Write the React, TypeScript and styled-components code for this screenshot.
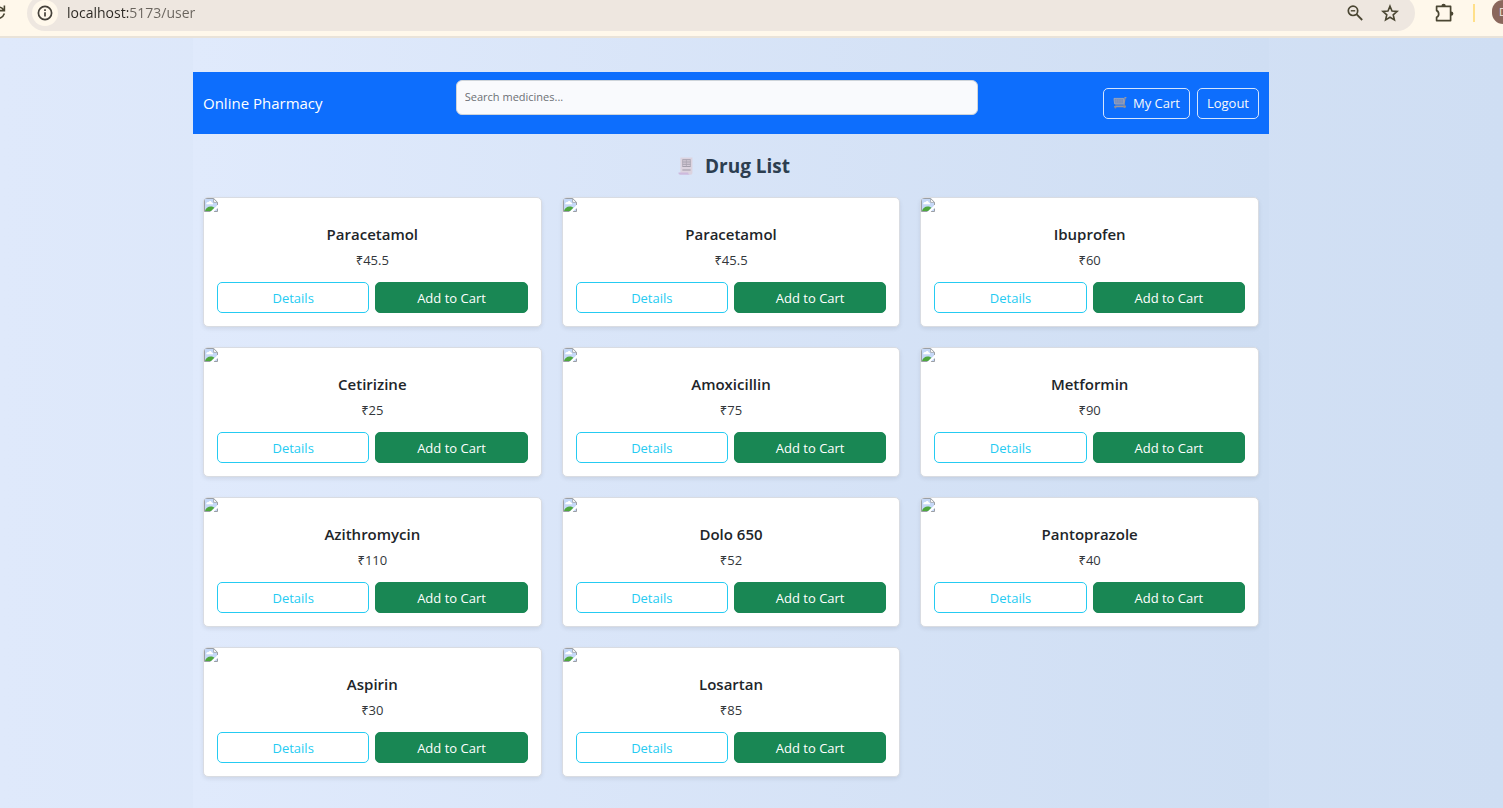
import React from "react";
import styled, { createGlobalStyle, css } from "styled-components";

const GlobalStyle = createGlobalStyle`
  *, *::before, *::after { box-sizing: border-box; }
  html, body { margin: 0; }
  body {
    font-family: "Open Sans", "Noto Sans", sans-serif;
    font-size: 13px;
    line-height: 20px;
    color: #212529;
    background: #cfdef3;
  }
  button, input { font: inherit; }
`;

const Screen = styled.div`
  display: flex;
  flex-direction: column;
  min-height: 100vh;
`;

/* ---------- browser toolbar ---------- */

const BrowserBar = styled.header`
  display: flex;
  align-items: flex-start;
  height: 38px;
  overflow: hidden;
  background: #fff8eb;
  border-bottom: 2px solid #e9e3d9;
`;

const ToolButton = styled.button<{ $width: number }>`
  flex: none;
  display: flex;
  align-items: center;
  justify-content: center;
  width: ${(p) => p.$width}px;
  height: 26px;
  padding: 0;
  border: 0;
  background: none;
  color: #4a4632;
`;

const ReloadButton = styled(ToolButton)`
  justify-content: flex-start;
`;

const AddressBar = styled.div`
  flex: 1;
  display: flex;
  align-items: center;
  height: 36px;
  margin-top: -5px;
  padding: 0 8px 0 5px;
  border-radius: 18px;
  background: #eee7e0;
`;

const SiteInfo = styled(ToolButton)`
  border-radius: 50%;
  background: #fff8eb;
  color: #45413a;
`;

const Address = styled.input`
  flex: 1;
  min-width: 0;
  margin-left: 9px;
  padding: 0;
  border: 0;
  outline: 0;
  font-size: 14px;
  line-height: 20px;
  color: transparent;
  background: linear-gradient(to right, #2b2823 61px, #68635c 61px);
  background-clip: text;
  -webkit-background-clip: text;
`;

const BarDivider = styled.span`
  flex: none;
  width: 2px;
  height: 18px;
  margin: 4px 17px 0 0;
  background: #ffe08a;
`;

const Avatar = styled.button`
  flex: none;
  width: 11px;
  height: 24px;
  padding: 0 0 0 7px;
  border: 0;
  border-radius: 12px 0 0 12px;
  overflow: hidden;
  background: #8a675c;
  color: #f3e9e4;
  font-size: 11px;
  line-height: 24px;
  text-align: left;
`;

/* ---------- page ---------- */

const Page = styled.div`
  flex: 1;
  display: flex;
  padding: 0 234px 0 193px;
  background: linear-gradient(to right, #dfe9fb, #cfdef3);
`;

const Container = styled.main`
  flex: 1;
  min-width: 0;
  padding: 34px 0 31px;
  background: linear-gradient(to right, #e0eafc, #cfdef3);
`;

const Navbar = styled.nav`
  display: flex;
  align-items: center;
  justify-content: space-between;
  height: 62px;
  padding: 0 10px;
  background: #0d6efd;
`;

const Brand = styled.a`
  margin-right: 8px;
  font-size: 15px;
  line-height: 24px;
  color: #fff;
  text-decoration: none;
`;

const Search = styled.input`
  flex: 0 1 522px;
  align-self: flex-start;
  min-width: 0;
  height: 35px;
  margin-top: 8px;
  padding: 0 8px 2px;
  border: 1px solid #ced4da;
  border-radius: 6px;
  background: #f9fafd;
  font-size: 11px;
  line-height: 20px;
  color: #212529;
  &::placeholder {
    color: #6c7075;
    opacity: 1;
  }
`;

const NavActions = styled.div`
  display: flex;
  gap: 7px;
`;

const buttonBase = css`
  display: flex;
  align-items: center;
  justify-content: center;
  height: 31px;
  padding: 0 9px;
  border: 1px solid;
  border-radius: 5px;
  font-size: 13px;
  line-height: 20px;
  cursor: pointer;
`;

const OutlineLight = styled.button`
  ${buttonBase}
  gap: 6px;
  border-color: #d5e5fd;
  background: transparent;
  color: #f8f9fa;
`;

const Heading = styled.h1`
  display: flex;
  align-items: center;
  justify-content: center;
  gap: 12px;
  margin: 20px 0 19px;
  padding-left: 6px;
  font-size: 19px;
  line-height: 24px;
  font-weight: 700;
  color: #2c3e50;
`;

const DrugGrid = styled.section`
  display: grid;
  grid-template-columns: repeat(3, 1fr);
  gap: 20px;
  padding: 0 10px;
`;

const Card = styled.article`
  overflow: hidden;
  border: 1px solid #d9dce2;
  border-radius: 5px;
  background: #fff;
  box-shadow: 0 2px 4px rgba(0, 0, 0, 0.08);
`;

const CardImage = styled.div`
  display: flex;
  height: 14px;
`;

const CardBody = styled.div`
  padding: 13px;
  text-align: center;
`;

const DrugName = styled.h2`
  margin: 0 0 7px;
  font-size: 15px;
  line-height: 18px;
  font-weight: 600;
`;

const Price = styled.p`
  margin: 0 0 12px;
  font-size: 13px;
  line-height: 20px;
  color: #33373b;
`;

const CardActions = styled.div`
  display: grid;
  grid-template-columns: 1fr 1fr;
  gap: 6px;
`;

const DetailsButton = styled.button`
  ${buttonBase}
  border-color: #25cbf2;
  background: #fff;
  color: #25cbf2;
`;

const AddButton = styled.button`
  ${buttonBase}
  border-color: #198754;
  background: #198754;
  color: #fff;
`;

/* ---------- drawings ---------- */

const ReloadIcon = () => (
  <svg width="6" height="20" viewBox="0 0 6 20" fill="none" stroke="#4a4632" strokeWidth="1.6" aria-hidden="true">
    <path d="M0 4.2C1.6 4.5 2.6 5.4 3.6 7M4.4 2.6v5H0M4.4 10.4C3.6 12.8 2 14.4 0 15.2" />
  </svg>
);

const InfoIcon = () => (
  <svg width="16" height="16" viewBox="0 0 16 16" fill="none" stroke="currentColor" aria-hidden="true">
    <circle cx="8" cy="8" r="6.6" strokeWidth="1.7" />
    <path d="M8 7.2v4.2M8 4.3v1.7" strokeWidth="1.7" />
  </svg>
);

const ZoomOutIcon = () => (
  <svg width="18" height="18" viewBox="0 0 18 18" fill="none" stroke="currentColor" aria-hidden="true">
    <circle cx="7" cy="6.8" r="4.7" strokeWidth="1.7" />
    <path d="M4.8 6.8h4.4" strokeWidth="1.4" />
    <path d="M10.4 10.2l5.8 5.8" strokeWidth="1.8" />
  </svg>
);

const StarIcon = () => (
  <svg width="18" height="18" viewBox="0 0 18 18" fill="none" stroke="currentColor" strokeWidth="1.6" aria-hidden="true">
    <path d="M9 2.2l2 4.8 5.1.4-3.9 3.4 1.2 5.1L9 13.2l-4.4 2.7 1.2-5.1L1.9 7.4 7 7z" />
  </svg>
);

const PuzzleIcon = () => (
  <svg width="20" height="20" viewBox="0 0 20 20" fill="none" stroke="currentColor" strokeWidth="1.7" strokeLinejoin="round" aria-hidden="true">
    <path d="M2.6 3.4h14v14.2h-14v-3.4c2.8-1 2.8-5.6 0-6.6z" />
    <path d="M7.4 3.2a2.2 2.4 0 0 1 4.4 0zM17 8.4a2.4 2.2 0 0 1 0 4.4z" fill="currentColor" stroke="none" />
  </svg>
);

const CartIcon = () => (
  <svg width="14" height="12" viewBox="0 0 14 12" fill="none" aria-hidden="true">
    <path d="M1 1.4h9.6v5.4H1.6z" fill="#6f8cc6" stroke="#a3a9b8" strokeWidth=".9" />
    <path d="M1.2 3.2h9.2M1.4 5h9M3.4 1.4v5.4M5.8 1.4v5.4M8.2 1.4v5.4" stroke="#8f99b3" strokeWidth=".6" />
    <path d="M13.4.6h-1.4l-1 7.4H2.2M1.2 9.6h11" stroke="#9a979f" strokeWidth="1.2" />
    <circle cx="2.4" cy="10.4" r="1" fill="#8a8b96" />
    <circle cx="11.6" cy="9.6" r="1.4" fill="#94908f" />
  </svg>
);

const ReceiptIcon = () => (
  <svg width="15" height="20" viewBox="0 0 15 20" fill="none" aria-hidden="true">
    <path d="M2.4 1.6h12v15.2c0 1.2-.6 2-1.8 2L2.4 17z" fill="#dcd3df" />
    <path d="M4.4 3.8h8.2M4.4 6h8.2M4.4 8.2h8.2M4.4 10.4h8.2M4.4 14h8.2" stroke="#9d98a5" strokeWidth="1" />
    <path d="M4.6 3.8v6.8M8.4 3.8v6.8M12.4 3.8v6.8" stroke="#aaa5b2" strokeWidth=".7" />
    <path d="M.4 16.6h9.8c0 1.4.8 2.2 2.2 2.2H2.4c-1.2 0-2-.8-2-2.2z" fill="#cdbadd" />
  </svg>
);

const MissingImageIcon = ({ label }: { label: string }) => (
  <svg width="14" height="14" viewBox="0 0 14 14" role="img" aria-label={label}>
    <path d="M.5.5h9.2l3.8 3.8v9.2H.5z" fill="#c5d8f7" />
    <path d="M2.2 6.2c0-2 1.4-2.6 2.4-2.2.8-1.6 3-1.2 3.2.6 1 0 1.4.8 1.2 1.6z" fill="#fff" />
    <path d="M1 13c.8-3.2 3.4-4.8 6-4.6 1.6 0 2.6.6 3.4 1.4L7.2 13z" fill="#4fa83d" />
    <path d="M.5 13.5V.5h9.2l3.8 3.8V7" fill="none" stroke="#9b9fa5" />
    <path d="M.5 13.5h6M10 13.5h3.5V10.6" fill="none" stroke="#9b9fa5" />
    <path d="M9.6.6v3.8h3.8z" fill="#fff" stroke="#9b9fa5" strokeWidth=".8" />
    <path d="M6.4 14L14 6.8v2.8L9.4 14z" fill="#fff" />
  </svg>
);

const drugs = [
  { id: 1, name: "Paracetamol", price: 45.5 },
  { id: 2, name: "Paracetamol", price: 45.5 },
  { id: 3, name: "Ibuprofen", price: 60 },
  { id: 4, name: "Cetirizine", price: 25 },
  { id: 5, name: "Amoxicillin", price: 75 },
  { id: 6, name: "Metformin", price: 90 },
  { id: 7, name: "Azithromycin", price: 110 },
  { id: 8, name: "Dolo 650", price: 52 },
  { id: 9, name: "Pantoprazole", price: 40 },
  { id: 10, name: "Aspirin", price: 30 },
  { id: 11, name: "Losartan", price: 85 },
];

export default function App() {
  return (
    <Screen>
      <GlobalStyle />
      <BrowserBar>
        <ReloadButton $width={27} aria-label="Reload"><ReloadIcon /></ReloadButton>
        <AddressBar>
          <SiteInfo $width={26} aria-label="Site information"><InfoIcon /></SiteInfo>
          <Address aria-label="Address" defaultValue="localhost:5173/user" />
          <ToolButton $width={35} aria-label="Zoom"><ZoomOutIcon /></ToolButton>
          <ToolButton $width={35} aria-label="Bookmark"><StarIcon /></ToolButton>
        </AddressBar>
        <ToolButton $width={58} aria-label="Extensions"><PuzzleIcon /></ToolButton>
        <BarDivider />
        <Avatar aria-label="Profile">D</Avatar>
      </BrowserBar>
      <Page>
        <Container>
          <Navbar>
            <Brand href="#">Online Pharmacy</Brand>
            <Search type="text" aria-label="Search medicines" placeholder="Search medicines..." />
            <NavActions>
              <OutlineLight><CartIcon />My Cart</OutlineLight>
              <OutlineLight>Logout</OutlineLight>
            </NavActions>
          </Navbar>
          <Heading><ReceiptIcon />Drug List</Heading>
          <DrugGrid>
            {drugs.map((drug) => (
              <Card key={drug.id}>
                <CardImage><MissingImageIcon label={drug.name} /></CardImage>
                <CardBody>
                  <DrugName>{drug.name}</DrugName>
                  <Price>₹{drug.price}</Price>
                  <CardActions>
                    <DetailsButton>Details</DetailsButton>
                    <AddButton>Add to Cart</AddButton>
                  </CardActions>
                </CardBody>
              </Card>
            ))}
          </DrugGrid>
        </Container>
      </Page>
    </Screen>
  );
}
